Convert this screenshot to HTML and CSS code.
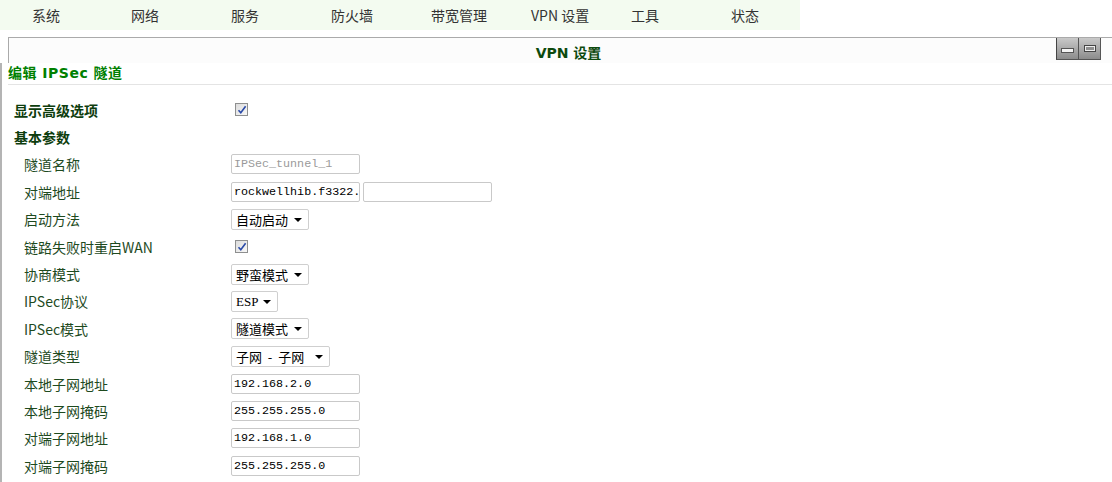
FILE: index.html
```html
<!DOCTYPE html>
<html>
<head>
<meta charset="utf-8">
<link rel="stylesheet" href="styles.css">
</head>
<body>
<div class="nav">
  <span class="nav-item">系统</span>
  <span class="nav-item">网络</span>
  <span class="nav-item">服务</span>
  <span class="nav-item">防火墙</span>
  <span class="nav-item">带宽管理</span>
  <span class="nav-item">VPN 设置</span>
  <span class="nav-item">工具</span>
  <span class="nav-item">状态</span>
</div>
<div class="panel-head">
  <div class="panel-title">VPN 设置</div>
  <div class="win-btns">
    <span class="win-btn"><span class="ico-min"></span></span>
    <span class="win-btn"><span class="ico-max"></span></span>
  </div>
</div>
<div class="content">
  <div class="page-title">编辑 IPSec 隧道</div>
  <div class="form">
    <div class="row"><div class="label sect">显示高级选项</div><div class="ctl"><span class="chk"><svg width="10" height="10" viewBox="0 0 10 10"><path d="M1.5 5.2 L3.8 7.8 L8.6 1.2" fill="none" stroke="#2a4aa8" stroke-width="1.6"/></svg></span></div></div>
    <div class="row"><div class="label sect">基本参数</div><div class="ctl"></div></div>
    <div class="row"><div class="label">隧道名称</div><div class="ctl"><span class="inp dis">IPSec_tunnel_1</span></div></div>
    <div class="row"><div class="label">对端地址</div><div class="ctl"><span class="inp">rockwellhib.f3322.</span><span class="inp"></span></div></div>
    <div class="row"><div class="label">启动方法</div><div class="ctl"><span class="sel w78">自动启动<span class="arr"></span></span></div></div>
    <div class="row"><div class="label">链路失败时重启WAN</div><div class="ctl"><span class="chk"><svg width="10" height="10" viewBox="0 0 10 10"><path d="M1.5 5.2 L3.8 7.8 L8.6 1.2" fill="none" stroke="#2a4aa8" stroke-width="1.6"/></svg></span></div></div>
    <div class="row"><div class="label">协商模式</div><div class="ctl"><span class="sel w78">野蛮模式<span class="arr"></span></span></div></div>
    <div class="row"><div class="label">IPSec协议</div><div class="ctl"><span class="sel w47 mono">ESP<span class="arr"></span></span></div></div>
    <div class="row"><div class="label">IPSec模式</div><div class="ctl"><span class="sel w78">隧道模式<span class="arr"></span></span></div></div>
    <div class="row"><div class="label">隧道类型</div><div class="ctl"><span class="sel w99">子网&nbsp; -&nbsp; 子网<span class="arr"></span></span></div></div>
    <div class="row"><div class="label">本地子网地址</div><div class="ctl"><span class="inp">192.168.2.0</span></div></div>
    <div class="row"><div class="label">本地子网掩码</div><div class="ctl"><span class="inp">255.255.255.0</span></div></div>
    <div class="row"><div class="label">对端子网地址</div><div class="ctl"><span class="inp">192.168.1.0</span></div></div>
    <div class="row"><div class="label">对端子网掩码</div><div class="ctl"><span class="inp">255.255.255.0</span></div></div>
  </div>
</div>
</body>
</html>
```
FILE: styles.css
```css
html, body {
  margin: 0;
  padding: 0;
  background: #ffffff;
  font-family: "Noto Sans CJK SC", "Liberation Sans", sans-serif;
  font-size: 14px;
}
body {
  height: 100vh;
  display: flex;
  flex-direction: column;
  overflow: hidden;
}
.nav {
  width: 800px;
  height: 30px;
  flex: none;
  background: #f3fbf0;
  display: flex;
  align-items: center;
}
.nav-item {
  width: 100px;
  box-sizing: border-box;
  padding-left: 31px;
  color: #333333;
  font-size: 14px;
  line-height: 28px;
  white-space: nowrap;
}
.nav-item:first-child { padding-left: 32px; }
.panel-head {
  position: relative;
  flex: none;
  margin-top: 7px;
  margin-left: 8px;
  height: 25px;
  border-top: 1px solid #aaaaaa;
  border-left: 1px solid #aaaaaa;
  background: #fcfcfc;
}
.panel-title {
  text-align: center;
  padding-left: 16px;
  padding-top: 5px;
  font-weight: bold;
  font-size: 14px;
  line-height: 20px;
  color: #0d4a0d;
  font-family: "DejaVu Sans", "Noto Sans CJK SC", sans-serif;
}
.win-btns {
  position: absolute;
  right: 11px;
  top: 0;
  display: flex;
  border-left: 1px solid #444;
  border-bottom: 1px solid #555;
}
.win-btn {
  width: 21px;
  height: 21px;
  display: flex;
  align-items: center;
  justify-content: center;
  background: linear-gradient(#c9c9c9, #8c8c8c);
  border-right: 1px solid #555;
}
.ico-min {
  width: 11px;
  height: 3px;
  margin-top: 4px;
  background: #f4f4f4;
  border: 1px solid #555;
}
.ico-max {
  width: 10px;
  height: 5px;
  border: 1px solid #444;
  box-shadow: inset 0 0 0 1px #eee;
  background: #8f8f8f;
}
.content {
  flex: 1;
  min-height: 0;
  border-left: 2px solid #b4b4b4;
}
.page-title {
  margin-left: 6px;
  padding-top: 1px;
  height: 20px;
  line-height: 18px;
  font-weight: bold;
  font-size: 14px;
  letter-spacing: 0.5px;
  color: #008000;
  font-family: "DejaVu Sans", "Noto Sans CJK SC", sans-serif;
  border-bottom: 1px solid #e4e4e4;
}
.form {
  padding-top: 11px;
}
.row {
  display: flex;
  align-items: center;
  height: 27.4px;
}
.label {
  width: 229px;
  box-sizing: border-box;
  padding-left: 22px;
  color: #1e4a1e;
  font-size: 14px;
  white-space: nowrap;
}
.label.sect {
  padding-left: 12px;
  font-weight: bold;
  color: #0d3d0d;
}
.ctl {
  display: flex;
  align-items: center;
  gap: 3px;
}
.chk {
  margin-left: 4px;
  width: 11px;
  height: 11px;
  border: 1px solid #8e8f8f;
  background: linear-gradient(135deg, #dcdcdc, #f8f8f8);
  display: flex;
  align-items: center;
  justify-content: center;
}
.inp {
  width: 129px;
  height: 20px;
  box-sizing: border-box;
  border: 1px solid #c9c9c9;
  border-radius: 2px;
  background: #fff;
  font-family: "Liberation Mono", monospace;
  font-size: 11.7px;
  line-height: 18px;
  padding-left: 2px;
  color: #000;
  white-space: nowrap;
  overflow: hidden;
}
.inp.dis { color: #9a9a9a; }
.sel {
  position: relative;
  height: 21px;
  box-sizing: border-box;
  border: 1px solid #cfcfcf;
  border-radius: 2px;
  background: #fff;
  font-size: 13px;
  line-height: 19px;
  padding-left: 4px;
  color: #000;
  white-space: nowrap;
}
.sel.mono { font-family: "Liberation Serif", serif; font-size: 13px; }
.w78 { width: 78px; }
.w47 { width: 47px; }
.w99 { width: 99px; }
.arr {
  position: absolute;
  right: 6px;
  top: 8px;
  width: 0;
  height: 0;
  border-left: 4px solid transparent;
  border-right: 4px solid transparent;
  border-top: 4px solid #000;
}
```
